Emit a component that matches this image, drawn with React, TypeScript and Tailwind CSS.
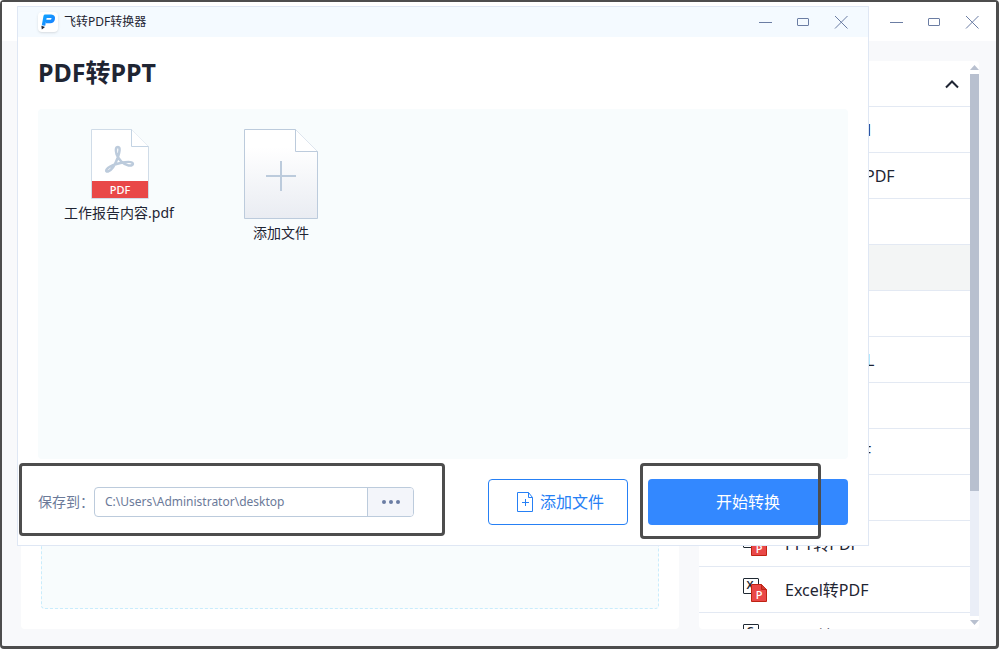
import { clsx } from 'clsx'

const MENU = [
  { title: 'PDF转Word', letter: 'W' },
  { title: '图片批量转PDF', letter: 'I' },
  { title: 'PDF转TXT', letter: 'T' },
  { title: 'PDF转PPT', letter: 'P', active: true },
  { title: 'PDF转图片', letter: 'I' },
  { title: 'PDF转HTML', letter: 'H' },
  { title: 'PDF转CAD', letter: 'C' },
  { title: 'Word转PDF', letter: 'W' },
  { title: '图片转PDF', letter: 'I' },
  { title: 'PPT转PDF', letter: 'P' },
  { title: 'Excel转PDF', letter: 'X' },
  { title: 'CAD转PDF', letter: 'C' },
]

function WindowControls() {
  return (
    <div className="flex items-center gap-6 text-[#6b7da3]">
      <button aria-label="最小化">
        <svg className="block" width="14" height="14" stroke="currentColor" fill="none">
          <path d="M1 7.5h13" />
        </svg>
      </button>
      <button aria-label="最大化">
        <svg className="block" width="14" height="14" stroke="currentColor" fill="none">
          <rect x="1.5" y="3.5" width="11" height="7" rx="0.5" />
        </svg>
      </button>
      <button aria-label="关闭">
        <svg className="block" width="14" height="14" stroke="currentColor" fill="none">
          <path d="M1 1l12.5 12.5M13.5 1L1 13.5" />
        </svg>
      </button>
    </div>
  )
}

function Logo() {
  return (
    <span className="flex h-5 w-5 items-center justify-center rounded bg-white shadow-sm">
      <svg width="18" height="18" viewBox="0 0 18 18" fill="none">
        <defs>
          <linearGradient id="logo" gradientUnits="userSpaceOnUse" x1="3" y1="2" x2="15" y2="14">
            <stop offset="0" stopColor="#10a6ff" />
            <stop offset="1" stopColor="#1a7bff" />
          </linearGradient>
        </defs>
        <path d="M4.500 12.500L6.200 3.200h6c1.800 0 2.300 1.300 2 2.700-.3 1.600-1.300 2.600-3 2.600H7" stroke="url(#logo)" strokeWidth="3.500" strokeLinejoin="round" />
        <path d="M2.400 12.800l3.600 1.200-3.200 2.500z" fill="#1c2433" />
      </svg>
    </span>
  )
}

function ConvertIcon({ letter }: { readonly letter: string }) {
  return (
    <svg width="24" height="24" className="shrink-0 overflow-visible">
      <rect x="0.5" y="0.5" width="15" height="15" rx="0.5" fill="#fff" stroke="#1f2933" />
      <text x="7" y="11" textAnchor="middle" fontSize="11" fontWeight="600" fill="#1f2933">
        {letter}
      </text>
      <path d="M8.500 6.500h10l5 5v12h-15z" fill="#e94848" stroke="#bf2313" />
      <path d="M18.500 6.500v5h5" fill="#d23a30" stroke="#bf2313" />
      <text x="16" y="21" textAnchor="middle" fontSize="11" fontWeight="500" fill="#fff">
        P
      </text>
    </svg>
  )
}

function PdfFile() {
  return (
    <svg width="60" height="70" viewBox="-2 0 60 70">
      <path d="M.5.5h40l17 17v52H.5z" fill="#fff" stroke="#d0dce8" />
      <path d="M40.500.5v17h17" fill="#fff" stroke="#c3d3e3" />
      <path
        d="M27 18c-2.500 0-2.500 3.500-1.500 7 2 6 7 10.500 12 11.500 3.500.5 5-1 4-2.500-1.200-2-6-1.300-12 0-5.500 1.200-10 3-12.500 5-3 2.500-2 4 0 3.500 4-1.200 8-9 10-14.500 1.700-5 2.500-10 0-10z"
        fill="none"
        stroke="#bccbdc"
        strokeWidth="2.500"
      />
      <path d="M1 52h56v17H1z" fill="#e94848" />
      <text x="29" y="65" textAnchor="middle" fontSize="11" fontWeight="500" fill="#fff">
        PDF
      </text>
    </svg>
  )
}

function AddFile() {
  return (
    <svg width="74" height="90">
      <defs>
        <linearGradient id="sheet" x1="0" y1="0" x2="0" y2="1">
          <stop offset="0.2" stopColor="#fff" />
          <stop offset="1" stopColor="#e9ecf2" />
        </linearGradient>
      </defs>
      <path d="M.5.5h51l22 22v67H.5z" fill="url(#sheet)" stroke="#bccbdc" />
      <path d="M51.500.5v22h22" fill="#fff" stroke="#bccbdc" />
      <path d="M22 47h30M37 32v30" stroke="#bccbdc" strokeWidth="2" />
    </svg>
  )
}

function Sidebar() {
  return (
    <aside className="flex w-[280px] shrink-0 overflow-hidden rounded bg-white">
      <ul className="min-w-0 flex-1 overflow-hidden">
        <li className="flex h-[46px] items-center justify-end border-b border-[#e3e9f3] pr-[10px]">
          <button aria-label="收起">
            <svg className="block" width="16" height="10" fill="none" stroke="#1f2533" strokeWidth="2">
              <path d="M2 8.500l6-6 6 6" />
            </svg>
          </button>
        </li>
        {MENU.map((item) => (
          <li key={item.title} className="border-b border-[#e3e9f3]">
            <button
              className={clsx(
                'flex h-[45px] w-full items-center gap-[18px] pl-11 text-base whitespace-nowrap',
                item.active && 'bg-[#f3f5f5]',
              )}
            >
              <ConvertIcon letter={item.letter} />
              {item.title}
            </button>
          </li>
        ))}
      </ul>
      {/* Scrollbar */}
      <div className="flex w-[9px] flex-col items-center py-1">
        <svg className="block" width="9" height="5" fill="#b8c0cf">
          <path d="M4.500 0L9 5H0z" />
        </svg>
        <div className="my-1 w-full flex-1 bg-[#eaeef7]">
          <div className="h-[77%] bg-[#b8c0cf]" />
        </div>
        <svg className="block" width="9" height="5" fill="#b8c0cf">
          <path d="M0 0h9L4.500 5z" />
        </svg>
      </div>
    </aside>
  )
}

function ConvertDialog() {
  return (
    <section className="absolute top-[6px] right-[131px] left-[17px] border border-[#dfe7f4] bg-white">
      <header className="flex h-[30px] items-center justify-between bg-[#f4faff] px-5">
        <div className="flex items-center gap-[6px] text-xs">
          <Logo />
          飞转PDF转换器
        </div>
        <WindowControls />
      </header>
      <div className="px-5">
        <h1 className="flex h-[72px] items-center text-[25px] font-bold">PDF转PPT</h1>
        <div className="flex h-[350px] rounded bg-[#f8fcfd] pt-5 text-sm">
          <figure className="flex w-[162px] flex-col items-center gap-1">
            <PdfFile />
            <figcaption>工作报告内容.pdf</figcaption>
          </figure>
          <button className="flex w-[162px] flex-col items-center gap-1 self-start">
            <AddFile />
            添加文件
          </button>
        </div>
        <footer className="flex h-[86px] items-center">
          <div className="relative flex flex-1 items-center">
            <label htmlFor="path" className="w-14 text-sm whitespace-nowrap text-[#6b7a99]">
              保存到：
            </label>
            <div className="flex h-[30px] w-[320px] overflow-hidden rounded border border-[#bccbdc]">
              <input
                id="path"
                className="min-w-0 flex-1 px-[10px] text-xs text-[#6b7a99] outline-none"
                defaultValue="C:\Users\Administrator\desktop"
              />
              <button
                aria-label="浏览"
                className="flex w-[46px] items-center justify-center gap-[3px] border-l border-[#bccbdc] bg-[#f3f5fa]"
              >
                <span className="h-1 w-1 rounded-full bg-[#6b7da3]" />
                <span className="h-1 w-1 rounded-full bg-[#6b7da3]" />
                <span className="h-1 w-1 rounded-full bg-[#6b7da3]" />
              </button>
            </div>
            <div className="pointer-events-none absolute -top-6 -left-[19px] h-[73px] w-[426px] rounded-sm border-3 border-[#4d4d4d]" />
          </div>
          <button className="flex h-[46px] w-[140px] items-center justify-center gap-[6px] rounded border border-[#2680f5] pl-1 text-base text-[#2680f5]">
            <svg width="18" height="20" fill="none" stroke="currentColor">
              <path d="M1.500.5h11l4 5v14h-15zM12.500.5v5h4M6 10.500h7M9.500 7v7" />
            </svg>
            添加文件
          </button>
          <div className="relative ml-5">
            <button className="h-[46px] w-[200px] rounded bg-[#3388ff] text-base text-white">开始转换</button>
            <div className="pointer-events-none absolute -top-4 -left-2 h-[76px] w-[181px] rounded-sm border-3 border-[#4d4d4d]" />
          </div>
        </footer>
      </div>
    </section>
  )
}

export default function App() {
  return (
    <div className="relative h-screen min-h-[560px] bg-white pr-px pb-px font-['Noto_Sans','Noto_Sans_CJK_SC',sans-serif] text-[#1f2533]">
      <main className="flex h-full flex-col rounded-sm border-t-2 border-r-3 border-b-3 border-l-2 border-[#4d4d4d] bg-[#f8f9fb]">
        <header className="flex h-[39px] shrink-0 items-center justify-end bg-white pr-[17px]">
          <WindowControls />
        </header>
        <div className="flex min-h-0 flex-1 gap-5 pt-5 pr-[17px] pb-[17px] pl-[19px]">
          <div className="flex flex-1 rounded bg-white p-5">
            <div className="flex-1 rounded-sm border border-dashed border-[#c9ecfc] bg-[#f8fcfd]" />
          </div>
          <Sidebar />
        </div>
      </main>
      <ConvertDialog />
    </div>
  )
}
